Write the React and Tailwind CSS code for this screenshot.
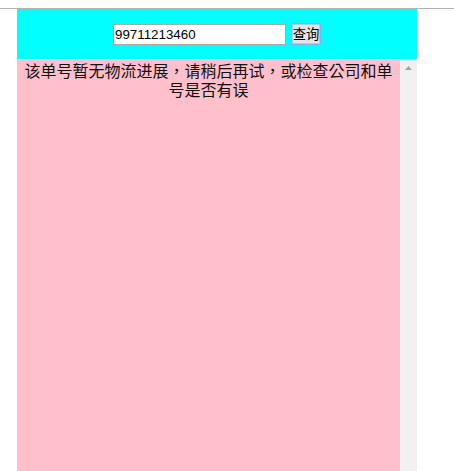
export default function App() {
  return (
    <div className="w-[454px] h-[471px] overflow-hidden bg-white" style={{ fontFamily: '"Liberation Sans", "Noto Sans CJK SC", sans-serif' }}>
      <div className="mt-[8px] border-t border-[#b3b3b3]">
        <div className="ml-[17px] w-[400px]">
          <div className="h-[50px] bg-[#00ffff] flex items-center justify-center gap-[5px]">
            <input
              defaultValue="99711213460"
              className="w-[173px] h-[21px] border border-[#a9a9a9] bg-white px-[1px] text-[13.33px] text-black outline-none"
              style={{ fontFamily: '"Liberation Sans", Arial, sans-serif' }}
            />
            <button className="h-[22px] w-[30px] whitespace-nowrap border border-[#7eb4ea] bg-[#e5e5e5] rounded-[2px] text-[13.33px] text-black flex items-center justify-center p-0 shadow-[inset_0_0_0_1px_#a8cdf2]" style={{ fontFamily: '"Noto Sans CJK SC", sans-serif' }}>
              查询
            </button>
          </div>
          <div className="flex h-[420px]">
            <div className="w-[383px] bg-[#ffc0cb] text-center text-[16px] leading-[19px] pt-[2px] text-[#111]" style={{ fontFamily: '"Noto Sans CJK TC", "Noto Sans CJK SC", sans-serif' }}>
              该单号暂无物流进展，请稍后再试，或检查公司和单号是否有误
            </div>
            <div className="w-[17px] bg-[#f0f0f0] flex justify-center pt-[7px]">
              <svg width="7" height="4" viewBox="0 0 7 4">
                <polygon points="3.5,0 7,4 0,4" fill="#a3a3a3" />
              </svg>
            </div>
          </div>
        </div>
      </div>
    </div>
  );
}
